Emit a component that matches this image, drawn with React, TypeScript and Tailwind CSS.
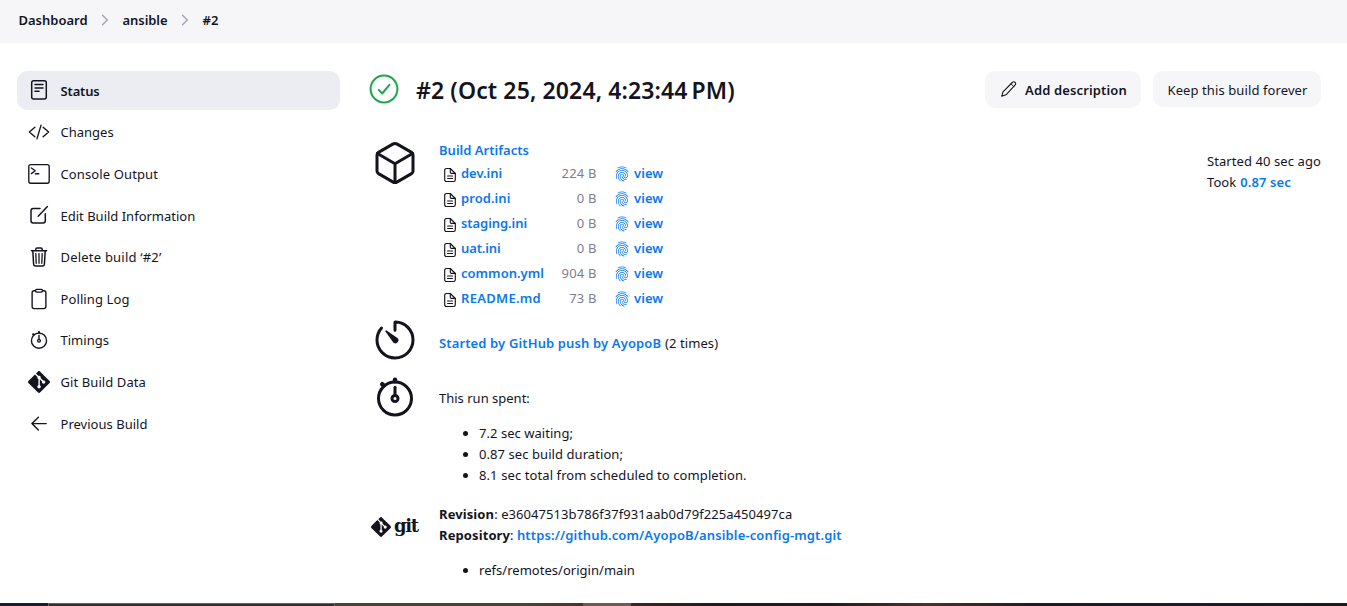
import type { ReactNode } from "react";
import {
  IoClipboardOutline,
  IoCodeSlashOutline,
  IoCubeOutline,
  IoFingerPrintOutline,
  IoStopwatchOutline,
  IoTimerOutline,
} from "react-icons/io5";
import { SiGit } from "react-icons/si";

function StatusIcon() {
  return (
    <svg viewBox="0 0 22 22" className="size-[22px]" fill="none" stroke="currentColor" strokeWidth="1.5" strokeLinecap="round">
      <rect x="3.7" y="1.7" width="14.6" height="18.4" rx="2" />
      <path d="M7 5.5h8M7 8.9h8M7 12.3h4" />
    </svg>
  );
}

function TerminalIcon() {
  return (
    <svg viewBox="0 0 22 22" className="size-[22px]" fill="none" stroke="currentColor" strokeWidth="1.35" strokeLinecap="round" strokeLinejoin="round">
      <rect x="0.8" y="1.6" width="20.4" height="18.6" rx="2" />
      <path d="M3.4 5l3.8 2.8-3.8 2.8M7.4 10.7h3.4" />
    </svg>
  );
}

function EditIcon() {
  return (
    <svg viewBox="0 0 22 22" className="size-[22px]" fill="none" stroke="currentColor" strokeWidth="1.5" strokeLinecap="round" strokeLinejoin="round">
      <path d="M12 4.6H5.2a2.2 2.2 0 0 0-2.2 2.2v9.9a2.2 2.2 0 0 0 2.2 2.2h9.9a2.2 2.2 0 0 0 2.2-2.2V9.8" />
      <path d="M19.4 2.6l-9.2 9.6" />
    </svg>
  );
}

function TrashIcon() {
  return (
    <svg viewBox="0 0 22 22" className="size-[22px]" fill="none" stroke="currentColor" strokeWidth="1.5" strokeLinecap="round" strokeLinejoin="round">
      <path d="M3.4 4.8h15.2M7.8 4.6V3.4a1.4 1.4 0 0 1 1.4-1.4h3.6a1.4 1.4 0 0 1 1.4 1.4v1.2" />
      <path d="M4.8 5l.8 13.3a1.9 1.9 0 0 0 1.9 1.8h7a1.9 1.9 0 0 0 1.9-1.8L17.2 5" />
      <path d="M11 7.6v9.7M7.8 7.6l.4 9.7M14.2 7.6l-.4 9.7" strokeWidth="1.3" />
    </svg>
  );
}

function ArrowIcon() {
  return (
    <svg viewBox="0 0 22 22" className="size-[22px]" fill="none" stroke="currentColor" strokeWidth="1.4" strokeLinecap="round" strokeLinejoin="round">
      <path d="M10.4 4.2L3.9 10.6l6.5 6.4M4.2 10.6h14" />
    </svg>
  );
}

function PencilIcon() {
  return (
    <svg viewBox="0 0 18 18" className="mr-[7px] mb-[2px] size-[18px]" fill="none" stroke="currentColor" strokeWidth="1.1" strokeLinecap="round" strokeLinejoin="round">
      <path d="M1.7 16.3l1.3-4.5L12.3 2.5c.9-.9 2-.9 2.8-.1s.8 1.9-.1 2.8L6 14.8z" />
      <path d="M11 3.8l3 3" strokeWidth="0.9" />
    </svg>
  );
}

function DocumentIcon() {
  return (
    <svg viewBox="0 0 16 16" className="ml-[3px] mr-[3px] mt-[3px] size-4 shrink-0" fill="none" stroke="currentColor" strokeWidth="1.15" strokeLinecap="round" strokeLinejoin="round">
      <path d="M8.3 1.5H4.4A1.7 1.7 0 0 0 2.7 3.2v9.6a1.7 1.7 0 0 0 1.7 1.7h7.2a1.7 1.7 0 0 0 1.7-1.7V6.5z" />
      <path d="M8.3 1.6v3.7a1.1 1.1 0 0 0 1.1 1.1h3.8M5.6 9h4.9M5.6 11.5h4.9" />
    </svg>
  );
}

function Chevron() {
  return (
    <svg viewBox="0 0 8 12" className="h-3 w-2 text-[#a5a5b8]" fill="none" stroke="currentColor" strokeWidth="1.5" strokeLinecap="round" strokeLinejoin="round">
      <path d="M1.5 1.2L6.3 6l-4.8 4.8" />
    </svg>
  );
}

const tasks: { label: string; icon: ReactNode; text: string }[] = [
  { label: "Status", icon: <StatusIcon />, text: "pt-[2.3px] font-semibold tracking-[-0.15px]" },
  { label: "Changes", icon: <IoCodeSlashOutline size={22} />, text: "pt-[1.3px] tracking-[0px]" },
  { label: "Console Output", icon: <TerminalIcon />, text: "pt-[1.3px] tracking-[0.12px]" },
  { label: "Edit Build Information", icon: <EditIcon />, text: "pt-[2.3px] tracking-[0px]" },
  { label: "Delete build ‘#2’", icon: <TrashIcon />, text: "pt-[1.3px] tracking-[0.21px]" },
  { label: "Polling Log", icon: <IoClipboardOutline size={22} />, text: "pt-[1.3px] tracking-[0.1px]" },
  { label: "Timings", icon: <IoStopwatchOutline size={22} />, text: "pt-[1.3px] tracking-[0.02px]" },
  { label: "Git Build Data", icon: <SiGit size={22} />, text: "pt-[1.3px] tracking-[0.09px]" },
  { label: "Previous Build", icon: <ArrowIcon />, text: "pt-[1.3px] tracking-[0.02px]" },
];

const artifacts = [
  { name: "dev.ini", size: "224 B", text: "tracking-[-0.04px]" },
  { name: "prod.ini", size: "0 B", text: "tracking-[0.07px]" },
  { name: "staging.ini", size: "0 B", text: "tracking-[-0.07px]" },
  { name: "uat.ini", size: "0 B", text: "tracking-[-0.13px]" },
  { name: "common.yml", size: "904 B", text: "tracking-[0.03px]" },
  { name: "README.md", size: "73 B", text: "tracking-[0.29px]" },
];

function Link({ children, className = "" }: { children: ReactNode; className?: string }) {
  return (
    <a href="#" className={`font-semibold text-[#0a78ee] ${className}`}>
      {children}
    </a>
  );
}

function Row({ icon, children, className }: { icon: ReactNode; children: ReactNode; className: string }) {
  return (
    <section className={`flex ${className}`}>
      <div className="flex w-[69px] shrink-0">
        <div className="flex h-12 w-[50px] justify-center">{icon}</div>
      </div>
      <div>{children}</div>
    </section>
  );
}

export default function App() {
  return (
    <div className="flex h-[606px] flex-col overflow-hidden bg-white font-['Noto_Sans',sans-serif] text-[13px] leading-[21px] text-[#14141f]">
      <nav className="flex h-[43px] shrink-0 items-center bg-[#f6f6f9] pb-[3px] pl-[18.5px] font-semibold">
        <a href="#" className="w-[82px]">Dashboard</a>
        <Chevron />
        <a href="#" className="ml-[14px] w-[58px] tracking-[-0.06px]">ansible</a>
        <Chevron />
        <a href="#" className="ml-[14px]">#2</a>
      </nav>

      <div className="flex min-h-0 flex-1 pl-[17px]">
        <aside className="flex w-[323px] shrink-0 flex-col gap-[2.97px] pt-7">
          {tasks.map((t, i) => (
            <a
              key={t.label}
              href="#"
              className={`flex h-[38.7px] shrink-0 items-center gap-[10.5px] rounded-[10px] pl-[11px] ${i === 0 ? "bg-[#ecedf3]" : ""}`}
            >
              <span className="flex size-[22px]">{t.icon}</span>
              <span className={t.text}>{t.label}</span>
            </a>
          ))}
        </aside>

        <main className="flex min-w-0 flex-1 flex-col pl-[30px] pr-[26px] pt-7">
          <header className="flex h-[38px] items-start">
            <svg viewBox="0 0 30 30" className="-ml-px mt-[3px] size-[30px] text-[#1ea64b]" fill="none" stroke="currentColor" strokeWidth="2" strokeLinecap="round" strokeLinejoin="round">
              <circle cx="15" cy="15" r="13.4" />
              <path d="M9.7 15.9l3.5 3.6 7.2-8.7" />
            </svg>
            <h1 className="ml-[17px] text-[23px] font-semibold leading-[38px] tracking-[0.12px]">#2 (Oct 25, 2024, 4:23:44{"\u202f"}PM)</h1>
            <div className="ml-auto flex items-start gap-3">
              <button className="flex h-[37px] w-[156px] items-center rounded-[10px] bg-[#f6f6f9] pl-[15px] pt-px font-semibold tracking-[0.14px]">
                <PencilIcon />
                Add description
              </button>
              <button className="h-9 w-[168px] rounded-[10px] bg-[#f6f6f9] pl-px pt-[3px] tracking-[0.1px]">Keep this build forever</button>
            </div>
          </header>

          <div className="flex items-start justify-between pt-[30px]">
            <Row icon={<IoCubeOutline size={48} />} className="h-[177px]">
              <Link className="block h-[22px] pt-px tracking-[0.02px]">Build Artifacts</Link>
              <ul>
                {artifacts.map((a) => (
                  <li key={a.name} className="flex h-[25px] items-center">
                    <DocumentIcon />
                    <Link className={`w-[84px] ${a.text}`}>{a.name}</Link>
                    <span className="w-[51.5px] text-right tracking-[0.15px] text-[#7e7e93]">{a.size}</span>
                    <IoFingerPrintOutline size={16} className="ml-[17.5px] mr-1 mt-px text-[#0a78ee]" />
                    <Link className="tracking-[0.05px]">view</Link>
                  </li>
                ))}
              </ul>
            </Row>
            <div className="w-[114px] whitespace-nowrap pt-3 tracking-[0.08px]">
              <p>Started 40 sec ago</p>
              <p>
                Took <Link className="ml-[0.5px]">0.87 sec</Link>
              </p>
            </div>
          </div>

          <Row icon={<IoTimerOutline size={48} />} className="h-[57px]">
            <p className="pt-[17px] tracking-[0.07px]">
              <Link className="mr-[0.5px] tracking-[0.13px]">Started by GitHub push by AyopoB</Link> (2 times)
            </p>
          </Row>

          <Row icon={<IoStopwatchOutline size={48} />} className="h-[131px]">
            <p className="pt-[15px]">This run spent:</p>
            <ul className="list-disc pl-10 pt-[14px]">
              <li className="tracking-[0.04px]">7.2 sec waiting;</li>
              <li className="tracking-[0.07px]">0.87 sec build duration;</li>
              <li className="tracking-[0.1px]">8.1 sec total from scheduled to completion.</li>
            </ul>
          </Row>

          <Row
            icon={
              <span className="flex h-[46px] w-[48px] items-center gap-[3px]">
                <SiGit size={20} className="shrink-0" />
                <span className="-mt-[3px] font-['DejaVu_Serif',serif] text-[18px] font-bold leading-none tracking-[-1.3px]">git</span>
              </span>
            }
            className="h-[84px]"
          >
            <p className="tracking-[0.07px]">
              <b className="tracking-[0.1px]">Revision</b>: e36047513b786f37f931aab0d79f225a450497ca
            </p>
            <p>
              <b className="tracking-[0.1px]">Repository</b>: <Link className="tracking-[0.13px]">https://github.com/AyopoB/ansible-config-mgt.git</Link>
            </p>
            <ul className="list-disc pl-10 pt-[14px]">
              <li className="tracking-[0.03px]">refs/remotes/origin/main</li>
            </ul>
          </Row>
        </main>
      </div>

      <footer className="flex h-[3px] shrink-0">
        <div className="w-12 bg-[#1b1b35]" />
        <div className="w-[287px] border-x border-t border-[#66625f] bg-[#302d2d]" />
        <div className="w-[248px] bg-linear-to-r from-[#4c4438] via-[#4c4438] via-75% to-[#51302d]" />
        <div className="w-12 bg-[#755653]" />
        <div className="flex-1 bg-[linear-gradient(to_right,#452322,#201b20_12%,#251b20_28%,#512f2a_41%,#1f1a24_57%,#1c1b2f_80%,#1c1a1c)]" />
      </footer>
    </div>
  );
}
